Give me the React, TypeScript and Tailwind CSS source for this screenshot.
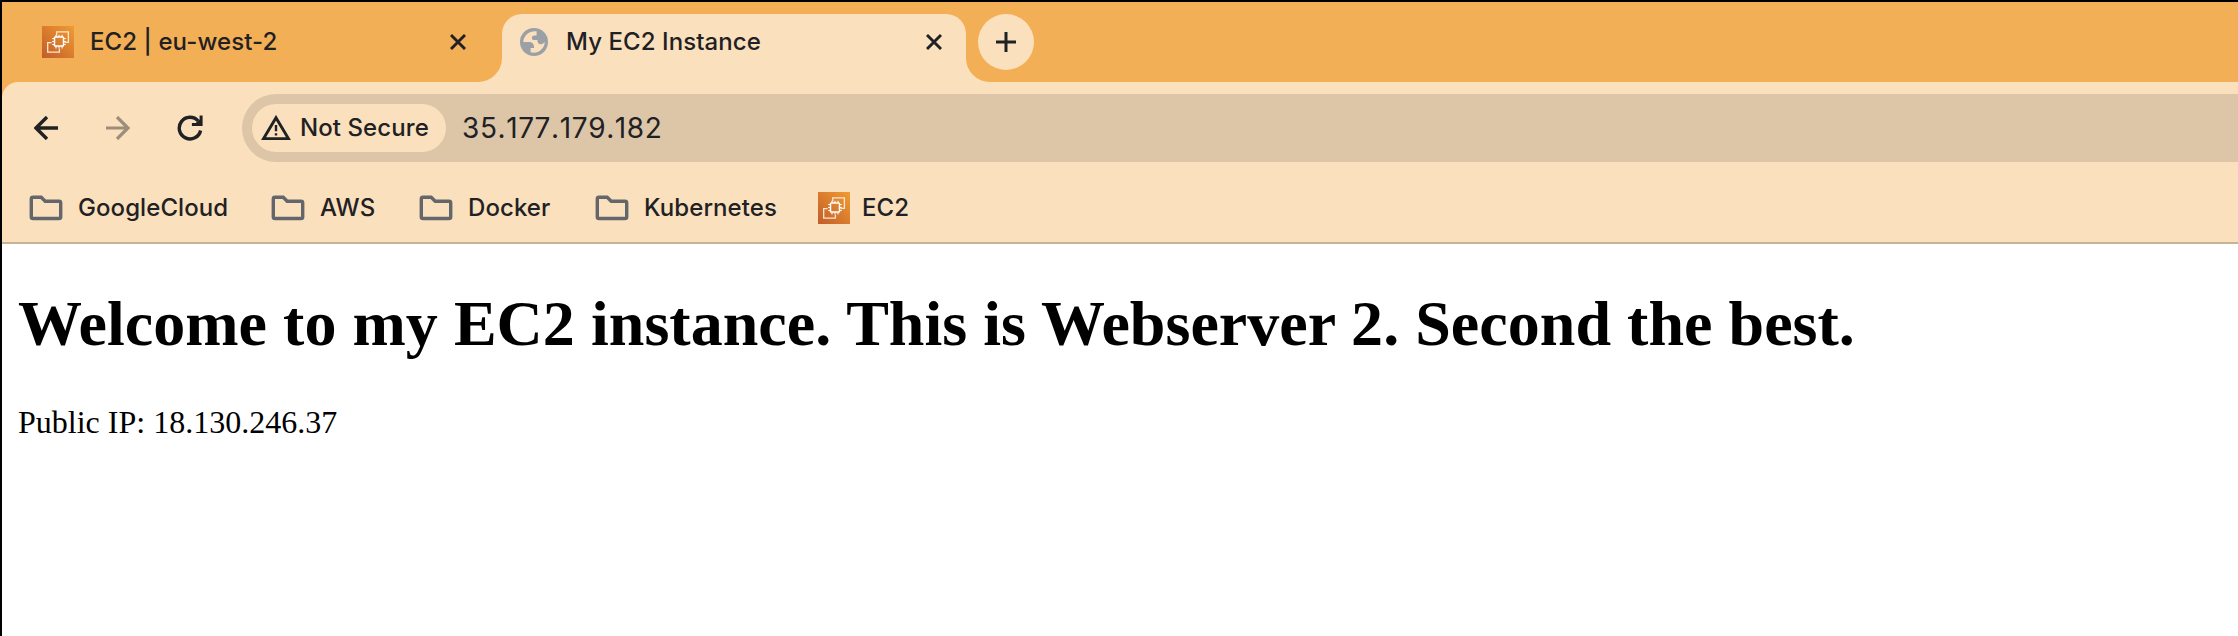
import React from "react";

const LABEL =
  "font-['Inter'] font-medium text-[24px] leading-[30px] tracking-[0.08px] text-[#1f2124] whitespace-nowrap";

function Ec2Icon() {
  return (
    <svg className="block size-8 shrink-0" viewBox="0 0 32 32" fill="none">
      <defs>
        <linearGradient id="ec2" x1="0" y1="32" x2="32" y2="0" gradientUnits="userSpaceOnUse">
          <stop stopColor="#c25c2a" />
          <stop offset="1" stopColor="#f09c32" />
        </linearGradient>
      </defs>
      <rect width="32" height="32" fill="url(#ec2)" />
      <path d="M14.7 9.5V5.8H26.4V16.4H22.6M17.4 22.8V26.2H5.7V16.6H9.6" stroke="#fbe6d2" strokeWidth="1.3" />
      <rect x="12.5" y="11" width="9" height="9" rx="0.8" stroke="#fff" strokeWidth="1.5" />
      <path
        d="M14 8.8V11M17 8.8V11M20 8.8V11M14 20V22.4M17 20V22.4M20 20V22.4M10.2 12.5H12.5M10.2 15.5H12.5M10.2 18.5H12.5M21.5 12.5H23.8M21.5 15.5H23.8M21.5 18.5H23.8"
        stroke="#fff"
        strokeWidth="1.1"
      />
    </svg>
  );
}

function GlobeIcon() {
  return (
    <svg className="block size-7 shrink-0" viewBox="0 0 28 28">
      <circle cx="14" cy="14" r="14" fill="#9aa0a6" />
      <path
        d="M16.6 3.3C10 2.2 3.6 7 3.2 14H9.2C12 14 14 16 14 18.4V20H10.6V24.3C17.5 26.3 24.6 21 24.8 14C24 15.2 22.6 16.3 20.8 16.3C18.4 16.3 17.4 14.4 17.4 12H13.4C11.2 11.2 11.4 7.4 14.4 7.4H16.6Z"
        fill="#fae0bc"
      />
    </svg>
  );
}

function CloseIcon() {
  return (
    <svg className="block size-4 shrink-0" viewBox="0 0 16 16">
      <path d="M1 1L15 15M15 1L1 15" stroke="#1f2124" strokeWidth="2.9" />
    </svg>
  );
}

function FolderIcon() {
  return (
    <svg className="block h-[26px] w-[34px] shrink-0" viewBox="0 0 34 26" fill="none">
      <path
        d="M4 2.3H12.2L16.2 6.3H30Q31.7 6.3 31.7 8V22Q31.7 23.5 30 23.5H4Q2.3 23.5 2.3 22V4Q2.3 2.3 4 2.3Z"
        stroke="#63666a"
        strokeWidth="3.4"
      />
    </svg>
  );
}

function Folder({ name, width }: { name: string; width: string }) {
  return (
    <div className={`flex shrink-0 items-center ${width}`}>
      <FolderIcon />
      <span className={`ml-[15px] ${LABEL}`}>{name}</span>
    </div>
  );
}

function TabStrip() {
  return (
    <div className="flex h-20 bg-[#f3af55]">
      <div className="flex h-20 w-[476px] items-center pl-10">
        <Ec2Icon />
        <span className={`ml-[16px] w-[360px] ${LABEL}`}>EC2 | eu-west-2</span>
        <CloseIcon />
      </div>
      <svg className="mt-auto block size-6 shrink-0" viewBox="0 0 24 24">
        <path d="M24 0V24H0A24 24 0 0 0 24 0Z" fill="#fae0bc" />
      </svg>
      <div className="mt-3 flex h-[68px] w-[464px] shrink-0 rounded-t-[20px] bg-[#fae0bc] pt-[14px] pl-[18px]">
        <GlobeIcon />
        <span className={`-mt-[1px] ml-[18px] w-[360px] ${LABEL}`}>My EC2 Instance</span>
        <div className="mt-[6px]">
          <CloseIcon />
        </div>
      </div>
      <svg className="mt-auto -mr-3 block size-6 shrink-0" viewBox="0 0 24 24">
        <path d="M0 0V24H24A24 24 0 0 1 0 0Z" fill="#fae0bc" />
      </svg>
      <div className="mt-3 flex size-14 shrink-0 items-center justify-center rounded-full bg-[#fae0bc]">
        <svg className="block size-5" viewBox="0 0 20 20">
          <path d="M10 0V20M0 10H20" stroke="#1f2124" strokeWidth="3" />
        </svg>
      </div>
    </div>
  );
}

function Toolbar() {
  return (
    <div className="flex h-[92px] items-center">
      <svg className="ml-[32px] block size-6 shrink-0" viewBox="0 0 24 24" fill="none" stroke="#1f2124" strokeWidth="3.4">
        <path d="M24 12H2.5M13 1L2 12L13 23" />
      </svg>
      <svg className="ml-[48px] block size-6 shrink-0" viewBox="0 0 24 24" fill="none" stroke="#9c8e7a" strokeWidth="3.2">
        <path d="M0 12H21.5M11 1L22 12L11 23" />
      </svg>
      <svg className="ml-[47px] block size-[26px] shrink-0" viewBox="0 0 26 26" fill="none">
        <path d="M21.2 6A10.8 10.8 0 1 0 23.6 15.5" stroke="#1f2124" strokeWidth="3.4" />
        <path d="M25.6 0.6V11H14.9V8H18.8L22.6 4.4V0.6Z" fill="#1f2124" />
      </svg>
      <div className="ml-[39px] flex h-[68px] flex-1 items-center rounded-l-full bg-[#dcc6a7] pl-[10px]">
        <div className="flex h-12 w-[194px] shrink-0 items-center rounded-full bg-[#fae0bc] pl-[9px]">
          <svg className="block h-[26px] w-[30px] shrink-0" viewBox="0 0 30 26" fill="none" stroke="#1f2124">
            <path d="M15 2.7L27.4 23.6H2.6Z" strokeWidth="2.9" />
            <path d="M15 10V16.2M15 18.2V20.6" strokeWidth="2.4" />
          </svg>
          <span className={`ml-[9px] ${LABEL}`}>Not Secure</span>
        </div>
        <span className="ml-4 font-['Inter'] text-[28px] leading-[34px] tracking-[0.6px] whitespace-nowrap text-[#1f2124] [font-kerning:none]">
          35.177.179.182
        </span>
      </div>
    </div>
  );
}

function Bookmarks() {
  return (
    <div className="flex h-[68px] items-center pl-[27px]">
      <Folder name="GoogleCloud" width="w-[242px]" />
      <Folder name="AWS" width="w-[148px]" />
      <Folder name="Docker" width="w-[176px]" />
      <Folder name="Kubernetes" width="w-[223px]" />
      <Ec2Icon />
      <span className={`ml-3 ${LABEL}`}>EC2</span>
    </div>
  );
}

export default function App() {
  return (
    <div className="h-[636px] w-[2238px] overflow-hidden border-t-2 border-l-2 border-black bg-white">
      <TabStrip />
      <div className="bg-[#f3af55]">
        <div className="h-[162px] rounded-tl-[16px] bg-[#fae0bc]">
          <Toolbar />
          <Bookmarks />
          <div className="h-[2px] bg-[#c6b294]" />
        </div>
      </div>
      <main className="px-4 font-['Liberation_Serif'] text-black">
        <h1 className="pt-[43px] text-[64px] leading-[74px] font-bold tracking-[0.035px] whitespace-nowrap">
          Welcome to my EC2 instance. This is Webserver 2. Second the best.
        </h1>
        <p className="mt-[43px] text-[32px] leading-[36px]">Public IP: 18.130.246.37</p>
      </main>
    </div>
  );
}
